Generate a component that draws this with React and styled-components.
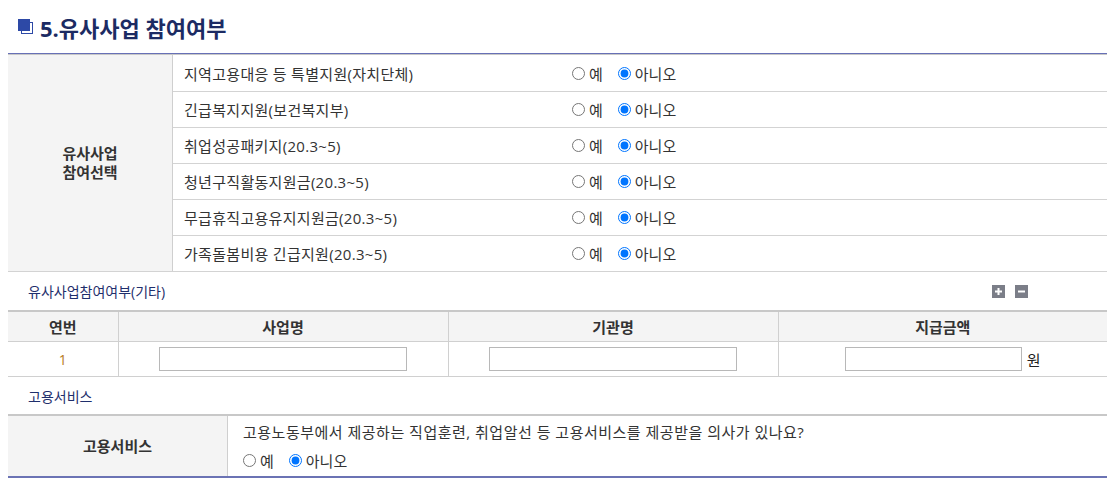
import React from "react"
import {useState} from "react"
import styled, {createGlobalStyle} from "styled-components"

const GlobalStyle = createGlobalStyle`
body{
    margin: 0;
    font-family: "Open Sans", "Noto Sans CJK KR", sans-serif;
    color: #333;
    background: #fff;
}
`

const Page = styled.div`
padding: 0 6px 0 8px;
`

const Title = styled.h2`
display: flex;
align-items: center;
gap: 7px;
height: 53px;
margin: 0;
padding-left: 10px;
font-size: 22px;
font-weight: 700;
color: #1c2b63;
`

const TitleIcon = styled.span`
position: relative;
width: 15px;
height: 15px;
margin-top: -1px;

&::before{
    content: "";
    position: absolute;
    left: 3px;
    top: 3px;
    width: 10px;
    height: 10px;
    border: 1px solid #2d49a6;
    background: #fff;
}
&::after{
    content: "";
    position: absolute;
    left: 0;
    top: 0;
    width: 12px;
    height: 12px;
    background: #2d49a6;
}
`

const ChoiceTable = styled.div`
display: grid;
grid-template-columns: 165px 1fr;
border-top: 1px solid #6770b6;
box-shadow: inset 0 1px 0 #c8c8c8;
padding-top: 1px;
border-bottom: 1px solid #d3d3d3;
`

const HeadCell = styled.div`
display: flex;
align-items: center;
justify-content: center;
text-align: center;
background: #f4f4f4;
border-right: 1px solid #cfcfcf;
font-size: 15px;
font-weight: 700;
line-height: 19px;
color: #333;
`

const ItemList = styled.div`
display: flex;
flex-direction: column;
`

const ItemRow = styled.div`
display: grid;
grid-template-columns: 388px 1fr;
align-items: center;
height: 36px;
padding-left: 11px;
font-size: 15px;
letter-spacing: 0.3px;
border-top: ${p => p.first ? "none" : "1px solid #d3d3d3"};
box-sizing: border-box;
`

const RadioGroup = styled.div`
display: flex;
align-items: center;
gap: 15px;
font-size: 15px;
letter-spacing: 0;
`

const RadioLabel = styled.label`
display: flex;
align-items: center;
gap: 4px;
cursor: pointer;

input{
    margin: 0;
    width: 13px;
    height: 13px;
}
`

const SubTitle = styled.div`
display: flex;
align-items: center;
justify-content: space-between;
height: ${p => p.h}px;
padding: 0 79px 0 20px;
font-size: 14px;
color: #1f2f6c;
box-sizing: border-box;
`

const Tools = styled.div`
display: flex;
gap: 10px;
`

const ToolButton = styled.button`
display: flex;
align-items: center;
justify-content: center;
width: 13px;
height: 13px;
padding: 0;
border: none;
background: #7b7e88;
cursor: pointer;
`

const Grid = styled.table`
width: 100%;
border-collapse: collapse;
border-top: 2px solid #c8c8c8;
font-size: 15px;

th{
    height: 29px;
    background: #f4f4f4;
    font-weight: 700;
    color: #333;
    border-left: 1px solid #d0d0d0;
    border-bottom: 1px solid #d0d0d0;
    padding: 0;
}
td{
    height: 34px;
    text-align: center;
    border-left: 1px solid #d0d0d0;
    border-bottom: 1px solid #d0d0d0;
    padding: 0;
}
th:first-child, td:first-child{
    border-left: none;
}
`

const Num = styled.td`
color: #b57a1a;
font-size: 14px;
`

const TextInput = styled.input`
width: ${p => p.w}px;
height: 24px;
box-sizing: border-box;
border: 1px solid #b8b8b8;
vertical-align: middle;
`

const Unit = styled.span`
margin-left: 5px;
vertical-align: middle;
color: #222;
`

const ServiceTable = styled.div`
display: grid;
grid-template-columns: 220px 1fr;
height: 60px;
border-top: 2px solid #c8c8c8;
border-bottom: 2px solid #6b73b4;
`

const ServiceBody = styled.div`
display: flex;
flex-direction: column;
justify-content: center;
gap: 8px;
padding-left: 15px;
font-size: 15px;
`

const Question = styled.span`
letter-spacing: 0.5px;
`

const items = [
    "지역고용대응 등 특별지원(자치단체)",
    "긴급복지지원(보건복지부)",
    "취업성공패키지(20.3~5)",
    "청년구직활동지원금(20.3~5)",
    "무급휴직고용유지지원금(20.3~5)",
    "가족돌봄비용 긴급지원(20.3~5)"
]

function YesNo({name, value, onChange}){
    return(
        <RadioGroup>
            <RadioLabel>
                <input type="radio" name={name} checked={value === "Y"} onChange={() => onChange("Y")} />
                예
            </RadioLabel>
            <RadioLabel>
                <input type="radio" name={name} checked={value === "N"} onChange={() => onChange("N")} />
                아니오
            </RadioLabel>
        </RadioGroup>
    )
}

function App(){

    const [answers, setAnswers] = useState(items.map(() => "N"))
    const [service, setService] = useState("N")

    function setAnswer(i, v){
        setAnswers(prev => prev.map((a, idx) => idx === i ? v : a))
    }

    return(
        <Page>
            <GlobalStyle />
            <Title><TitleIcon />5.유사사업 참여여부</Title>

            <ChoiceTable>
                <HeadCell>유사사업<br />참여선택</HeadCell>
                <ItemList>
                    {items.map((item, i) => (
                        <ItemRow key={item} first={i === 0}>
                            <span>{item}</span>
                            <YesNo name={"item" + i} value={answers[i]} onChange={v => setAnswer(i, v)} />
                        </ItemRow>
                    ))}
                </ItemList>
            </ChoiceTable>

            <SubTitle h={38}>
                <span>유사사업참여여부(기타)</span>
                <Tools>
                    <ToolButton aria-label="추가">
                        <svg width="7" height="7" viewBox="0 0 7 7"><path d="M2.5 0h2v2.5H7v2H4.5V7h-2V4.5H0v-2h2.5z" fill="#fff" /></svg>
                    </ToolButton>
                    <ToolButton aria-label="삭제">
                        <svg width="7" height="7" viewBox="0 0 7 7"><path d="M0 2.5h7v2H0z" fill="#fff" /></svg>
                    </ToolButton>
                </Tools>
            </SubTitle>

            <Grid>
                <colgroup>
                    <col style={{width: 110}} />
                    <col style={{width: 330}} />
                    <col style={{width: 330}} />
                    <col />
                </colgroup>
                <thead>
                    <tr>
                        <th>연번</th>
                        <th>사업명</th>
                        <th>기관명</th>
                        <th>지급금액</th>
                    </tr>
                </thead>
                <tbody>
                    <tr>
                        <Num>1</Num>
                        <td><TextInput w={248} /></td>
                        <td><TextInput w={248} /></td>
                        <td><TextInput w={177} /><Unit>원</Unit></td>
                    </tr>
                </tbody>
            </Grid>

            <SubTitle h={37}>
                <span>고용서비스</span>
            </SubTitle>

            <ServiceTable>
                <HeadCell>고용서비스</HeadCell>
                <ServiceBody>
                    <Question>고용노동부에서 제공하는 직업훈련, 취업알선 등 고용서비스를 제공받을 의사가 있나요?</Question>
                    <YesNo name="service" value={service} onChange={setService} />
                </ServiceBody>
            </ServiceTable>
        </Page>
    )
}

export default App
